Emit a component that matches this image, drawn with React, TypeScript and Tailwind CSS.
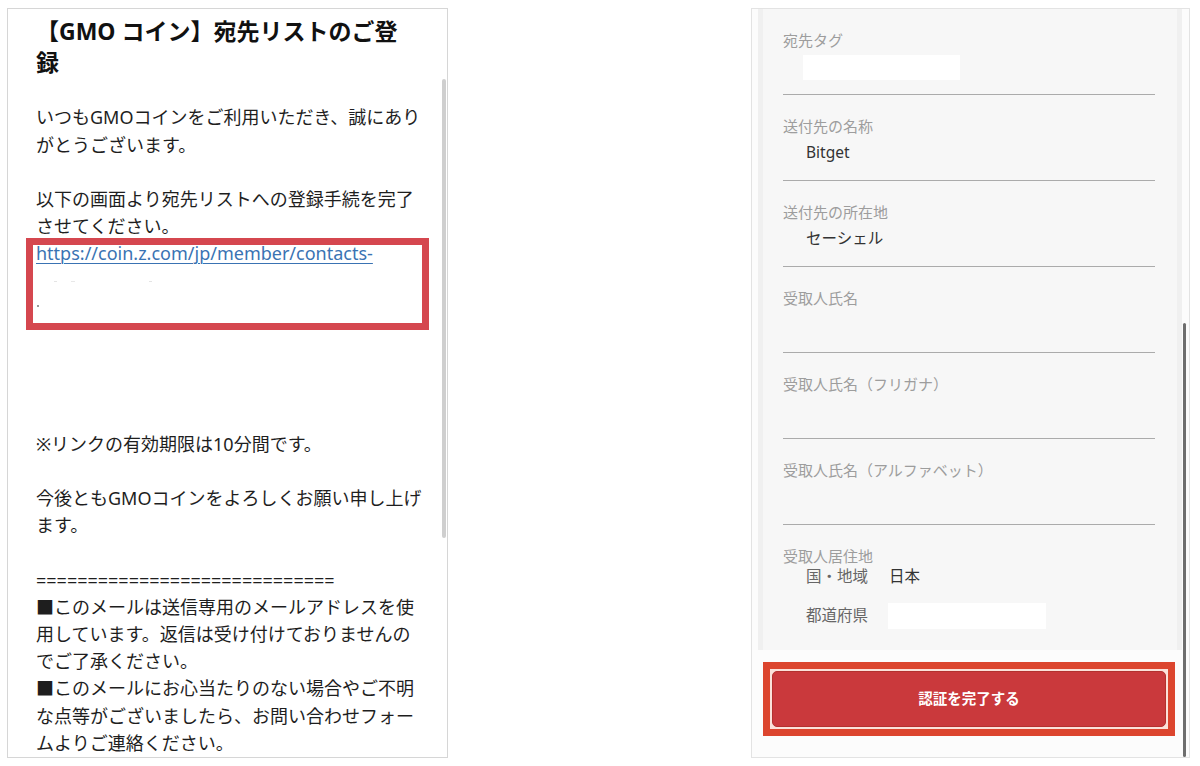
const jp = { fontFamily: '"Noto Sans", "Noto Sans CJK JP", sans-serif' }

const linesTop = [
  'いつもGMOコインをご利用いただき、誠にあり',
  'がとうございます。',
  '',
  '以下の画面より宛先リストへの登録手続を完了',
  'させてください。',
]

const linesBottom = [
  '',
  '',
  '',
  '',
  '※リンクの有効期限は10分間です。',
  '',
  '今後ともGMOコインをよろしくお願い申し上げ',
  'ます。',
  '',
  '=============================',
  '■このメールは送信専用のメールアドレスを使',
  '用しています。返信は受け付けておりませんの',
  'でご了承ください。',
  '■このメールにお心当たりのない場合やご不明',
  'な点等がございましたら、お問い合わせフォー',
  'ムよりご連絡ください。',
]

function Line({ text }: { text: string }) {
  return <div className="h-[27.2px] leading-[27.2px] whitespace-nowrap">{text}</div>
}

function Field({ label, children }: { label: string; children?: React.ReactNode }) {
  return (
    <div className="pt-[20px] pb-[15px] border-b border-[#ababab]">
      <div className="text-[15px] leading-[22px] text-[#9d9d9d]">{label}</div>
      <div className="mt-[4px] h-[24px] flex items-center">{children}</div>
    </div>
  )
}

export default function App() {
  return (
    <div className="w-[1200px] h-[766px] bg-white flex pt-[8px] pl-[7px]" style={jp}>
      {/* Left: email */}
      <div className="relative w-[441px] h-[750px] border border-[#d6d6d6] bg-white overflow-hidden">
        <div className="pl-[28px] pt-[6.5px] w-[418px] text-[18px] text-[#1e1e1e]">
          <h1 className="text-[23px] leading-[31px] font-bold text-[#111] w-[390px]">
            【GMO コイン】宛先リストのご登
            <br />録
          </h1>
          <div className="mt-[26.9px] w-[390px]">
            {linesTop.map((t, i) => (
              <Line key={i} text={t} />
            ))}

            {/* highlighted link */}
            <div className="relative">
              <div className="h-[27.2px] leading-[27.2px] whitespace-nowrap text-[#3a73b3] underline decoration-1 underline-offset-[3px]">
                https://coin.z.com/jp/member/contacts-
              </div>
              <div className="h-[27.2px] flex items-center gap-[14px] pl-[18px]">
                <span className="w-[3px] h-[1px] bg-[#e4e4e4]" />
                <span className="w-[4px] h-[1px] bg-[#e8e8e8]" />
                <span className="ml-[60px] w-[3px] h-[1px] bg-[#e4e4e4]" />
              </div>
              <div className="h-[27.2px] pl-[1px] pt-[10px]">
                <span className="block w-[2px] h-[2px] bg-[#9a9a9a]" />
              </div>
              <div className="absolute -left-[10px] -right-[3px] -top-[2px] -bottom-[8px] border-[7px] border-[#d5474f]" />
            </div>

            {linesBottom.map((t, i) => (
              <Line key={i} text={t} />
            ))}
          </div>
        </div>
        <div className="absolute right-[1px] top-[70px] w-[4px] h-[459px] rounded-full bg-[#cfcfcf]" />
      </div>

      {/* Right: form */}
      <div className="relative ml-[303px] w-[439px] h-[750px] border border-[#e3e3e3] bg-[#fcfcfc] overflow-hidden">
        <div className="ml-[6px] w-[424px] border-x-[5px] border-[#f0f0f0] bg-[#f7f7f7] pl-[20px] pr-[22px]">
          <Field label="宛先タグ">
            <div className="ml-[20px] w-[157px] h-[25px] bg-white" />
          </Field>
          <Field label="送付先の名称">
            <span className="ml-[23px] text-[15.5px] text-[#333]">Bitget</span>
          </Field>
          <Field label="送付先の所在地">
            <span className="ml-[23px] text-[15.5px] text-[#333]">セーシェル</span>
          </Field>
          <Field label="受取人氏名" />
          <Field label="受取人氏名（フリガナ）" />
          <Field label="受取人氏名（アルファベット）" />

          <div className="pt-[20px] pb-[21px]">
            <div className="text-[15px] leading-[22px] text-[#9d9d9d]">受取人居住地</div>
            <div className="flex items-center h-[20px] pl-[23px] text-[15.5px]">
              <span className="w-[83px] text-[#666]">国・地域</span>
              <span className="text-[#333]">日本</span>
            </div>
            <div className="mt-[16px] flex items-center h-[26px] pl-[23px] text-[15.5px]">
              <span className="w-[82px] text-[#666]">都道府県</span>
              <div className="w-[158px] h-[26px] bg-white" />
            </div>
          </div>
        </div>

        <div className="ml-[11px] mt-[12px] w-[412px] h-[74px] border-[7px] border-[#dc452e] bg-[#fbe1da] p-[2px]">
          <button className="w-full h-full rounded-[5px] bg-[#ca393c] border border-[#b3312f] text-white text-[14.5px] font-bold">
            認証を完了する
          </button>
        </div>

        <div className="absolute right-[3px] top-[314px] w-[3px] h-[434px] rounded-full bg-[#6e6e6e]" />
      </div>
    </div>
  )
}
